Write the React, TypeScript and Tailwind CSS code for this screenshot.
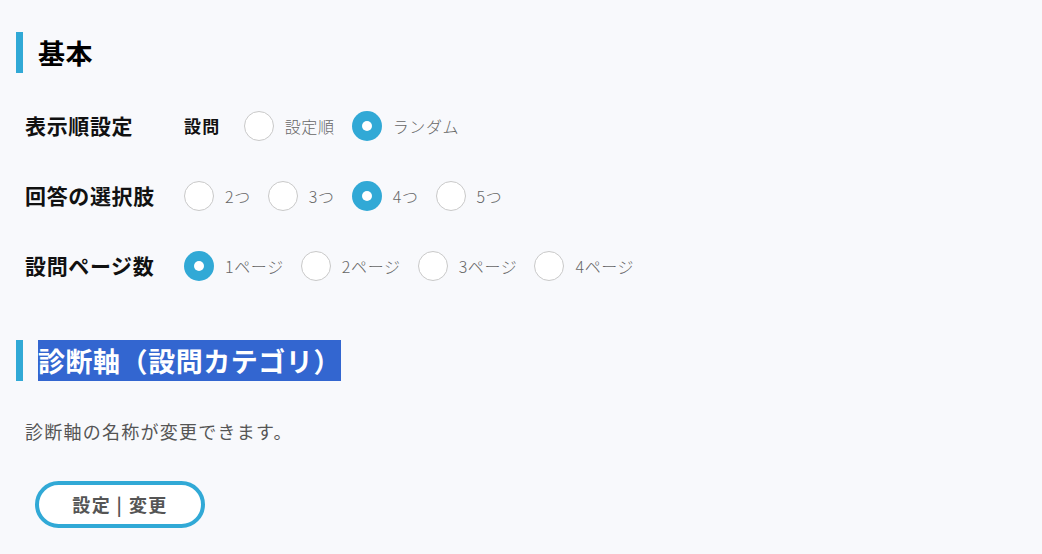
import React from "react";

const font = { fontFamily: '"Noto Sans CJK JP", "Noto Sans", sans-serif' };

function Radio({ checked }: { checked: boolean }) {
  return checked ? (
    <span className="flex h-[30px] w-[30px] shrink-0 items-center justify-center rounded-full bg-[#31a9d6]">
      <span className="h-[10px] w-[10px] rounded-full bg-white" />
    </span>
  ) : (
    <span className="h-[30px] w-[30px] shrink-0 rounded-full border border-[#c9c9c9] bg-white" />
  );
}

function Option({ label, checked }: { label: string; checked?: boolean }) {
  return (
    <label className="mr-[17px] flex items-center">
      <Radio checked={!!checked} />
      <span className="ml-[11px] text-[16px] font-light leading-[30px] tracking-[0.04em] text-[#666]">{label}</span>
    </label>
  );
}

function Heading({ children }: { children: React.ReactNode }) {
  return (
    <div className="flex h-[41px] items-stretch">
      <span className="w-[7px] bg-[#31a9d6]" />
      <h2 className="ml-[15px] text-[27px] font-bold leading-[41px] tracking-[0.02em]">{children}</h2>
    </div>
  );
}

function Row({ label, children }: { label: string; children: React.ReactNode }) {
  return (
    <div className="flex h-[30px] items-center pl-[9px]">
      <div className="w-[159px] text-[21px] font-bold tracking-[0.03em] text-[#111]">{label}</div>
      <div className="flex items-center">{children}</div>
    </div>
  );
}

export default function App() {
  return (
    <div className="min-h-screen bg-[#f8f9fc] px-[16px] pt-[32px] text-black" style={font}>
      <Heading>基本</Heading>

      <div className="mt-[38px] flex flex-col gap-[40px]">
        <Row label="表示順設定">
          <span className="mr-[23px] text-[17px] font-bold tracking-[0.08em] text-[#111]">設問</span>
          <Option label="設定順" />
          <Option label="ランダム" checked />
        </Row>
        <Row label="回答の選択肢">
          <Option label="2つ" />
          <Option label="3つ" />
          <Option label="4つ" checked />
          <Option label="5つ" />
        </Row>
        <Row label="設問ページ数">
          <Option label="1ページ" checked />
          <Option label="2ページ" />
          <Option label="3ページ" />
          <Option label="4ページ" />
        </Row>
      </div>

      <div className="mt-[59px]">
        <div className="flex h-[41px] items-stretch">
          <span className="w-[7px] bg-[#31a9d6]" />
          <h2 className="ml-[15px] text-[27px] font-bold leading-[41px] tracking-[0.02em]">
            <span className="inline-block bg-[#3366d0] text-white">診断軸（設問カテゴリ）</span>
          </h2>
        </div>
      </div>

      <p className="mt-[37px] pl-[9px] text-[18px] leading-[26px] tracking-[0.07em] text-[#555]">
        診断軸の名称が変更できます。
      </p>

      <button className="ml-[19px] mt-[37px] flex h-[47px] w-[170px] items-center justify-center rounded-full border-4 border-[#31a9d6] bg-white text-[18px] font-bold tracking-[0.08em] text-[#555]">
        設定&nbsp;|&nbsp;変更
      </button>
    </div>
  );
}
